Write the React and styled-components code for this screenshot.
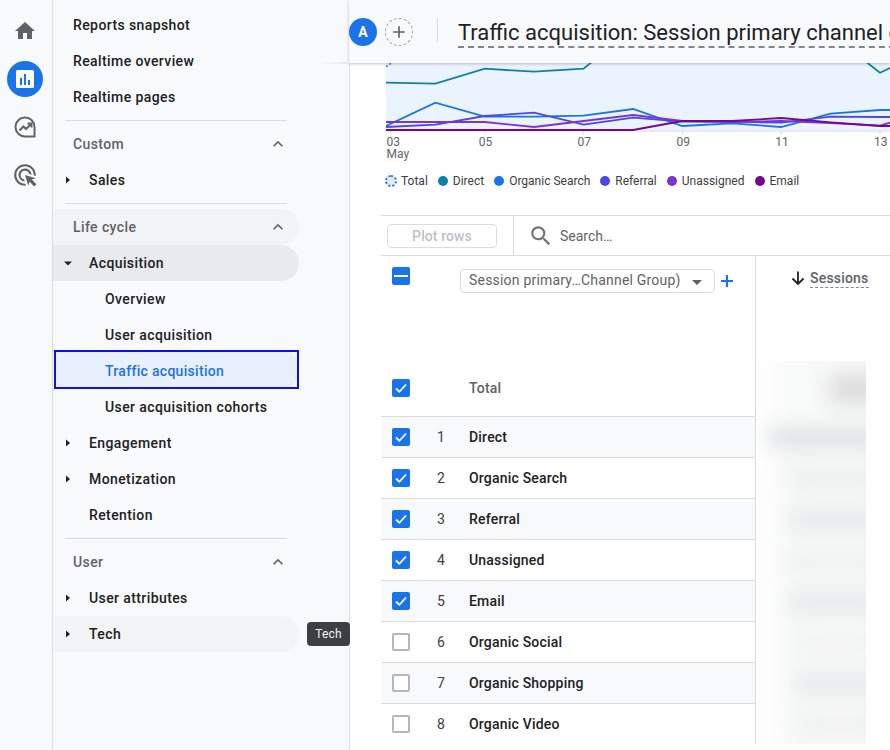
import React from 'react';
import styled, { createGlobalStyle } from 'styled-components';
import { MdHome, MdAdsClick, MdExpandLess, MdAdd, MdSearch } from 'react-icons/md';

const GlobalStyle = createGlobalStyle`
  html, body {
    margin: 0;
    height: 100%;
    overflow: hidden;
    background: #fff;
  }
  body {
    font-family: Roboto, "Liberation Sans", Arial, sans-serif;
    color: #202124;
  }
  * { box-sizing: border-box; }
`;

const Page = styled.div`
  display: flex;
  width: 890px;
  height: 750px;
  overflow: hidden;
`;

// icon rail
const Rail = styled.nav`
  flex: none;
  width: 53px;
  height: 100%;
  padding-top: 13px;
  background: #f8f9fb;
  border-right: 1px solid #dadce0;
  display: flex;
  flex-direction: column;
  align-items: center;
  color: #5f6368;
`;

const RailButton = styled.div`
  width: 36px;
  height: 36px;
  margin-bottom: 12px;
  margin-left: -2px;
  border-radius: 50%;
  display: flex;
  align-items: center;
  justify-content: center;
  background: ${(p) => (p.$active ? '#1a73e8' : 'transparent')};
`;

// sidebar
const Sidebar = styled.aside`
  flex: none;
  width: 297px;
  height: 100%;
  padding-top: 7px;
  background: #f8f9fb;
  border-right: 1px solid #dadce0;
`;

const Divider = styled.div`
  width: 222px;
  height: 1px;
  margin: 5px 0 5px 12px;
  background: #dadce0;
`;

const paddings = { 0: 20, 1: 7, 2: 52, 3: 36 };

const NavRow = styled.div`
  position: relative;
  display: flex;
  align-items: center;
  width: 246px;
  height: 36px;
  padding-left: ${(p) => paddings[p.$level || 0]}px;
  font-size: 14px;
  font-weight: 500;
  letter-spacing: 0.4px;
  color: #202124;
  white-space: nowrap;
  border-radius: 0 18px 18px 0;
  background: ${(p) => p.$bg || 'transparent'};
`;

const SectionRow = styled(NavRow)`
  justify-content: space-between;
  padding-right: 11px;
  color: #5f6368;
  svg {
    color: #5f6368;
  }
`;

const SelectedRow = styled(NavRow)`
  width: 245px;
  height: 39px;
  margin-left: 1px;
  margin-top: -3px;
  padding: 3px 0 0 51px;
  letter-spacing: 0.3px;
  color: #1a73e8;
  background: #e8f0fe;
  &::after {
    content: '';
    position: absolute;
    inset: 0;
    border: 2px solid #1010e6;
  }
`;

const CaretBox = styled.span`
  flex: none;
  display: flex;
  align-items: center;
  justify-content: center;
  width: 16px;
  height: 16px;
  margin-right: 13px;
`;

const Tooltip = styled.div`
  position: absolute;
  left: 254px;
  top: 6px;
  width: 43px;
  height: 24px;
  border-radius: 4px;
  background: #3c4043;
  color: #f1f3f4;
  font-size: 12px;
  font-weight: 400;
  letter-spacing: 0.2px;
  display: flex;
  align-items: center;
  justify-content: center;
`;

// main
const Main = styled.main`
  flex: 1;
  min-width: 0;
  height: 100%;
  background: #fff;
`;

const Header = styled.header`
  position: relative;
  z-index: 2;
  display: flex;
  align-items: center;
  height: 63px;
  margin-left: -1px;
  background: #f8f9fb;
  box-shadow: 0 1px 3px rgba(60, 64, 67, 0.3);
  &::before {
    content: '';
    position: absolute;
    left: -30px;
    top: 62px;
    width: 30px;
    height: 2px;
    background: linear-gradient(to right, rgba(218, 220, 224, 0), #e4e6e9);
  }
`;

const Avatar = styled.div`
  flex: none;
  width: 28px;
  height: 28px;
  border-radius: 50%;
  background: #1a73e8;
  color: #fff;
  font-size: 14px;
  font-weight: 700;
  display: flex;
  align-items: center;
  justify-content: center;
`;

const AddCompare = styled.div`
  flex: none;
  width: 28px;
  height: 28px;
  margin-left: 8px;
  border-radius: 50%;
  border: 1px dashed #9aa0a6;
  color: #5f6368;
  display: flex;
  align-items: center;
  justify-content: center;
`;

const HeaderRule = styled.div`
  flex: none;
  width: 1px;
  height: 24px;
  margin: 0 20px 3px 24px;
  background: #dadce0;
`;

const TitleClip = styled.div`
  flex: 1;
  min-width: 0;
  overflow: hidden;
`;

const Title = styled.h1`
  display: block;
  width: max-content;
  margin: 0;
  padding-top: 4px;
  font-size: 22px;
  line-height: 27px;
  font-weight: 400;
  white-space: nowrap;
  color: #202124;
  border-bottom: 2px dashed #80868b;
`;

const Chart = styled.svg`
  display: block;
  width: 504px;
  height: 100px;
  margin-left: 36px;
`;

const Legend = styled.div`
  display: flex;
  align-items: center;
  height: 16px;
  margin: 10px 0 26px 35px;
  font-size: 12px;
  color: #3c4043;
`;

const LegendItem = styled.div`
  display: flex;
  align-items: center;
  gap: 5px;
  margin-right: 10px;
`;

const LegendDot = styled.span`
  flex: none;
  width: ${(p) => (p.$total ? 12 : 10)}px;
  height: ${(p) => (p.$total ? 12 : 10)}px;
  margin-right: ${(p) => (p.$total ? -1 : 0)}px;
  border-radius: 50%;
  background: ${(p) => (p.$total ? '#e8eaed' : p.$color)};
  border: ${(p) => (p.$total ? '2px dotted #1a73e8' : 'none')};
`;

const TableWrap = styled.section`
  margin-left: 31px;
`;

const Toolbar = styled.div`
  display: flex;
  align-items: center;
  height: 41px;
  border-top: 1px solid #dadce0;
  border-bottom: 1px solid #dadce0;
`;

const PlotCell = styled.div`
  flex: none;
  width: 133px;
  height: 100%;
  padding-left: 6px;
  display: flex;
  align-items: center;
  border-right: 1px solid #dadce0;
`;

const PlotButton = styled.div`
  width: 110px;
  height: 24px;
  border: 1px solid #dadce0;
  border-radius: 4px;
  font-size: 14px;
  font-weight: 500;
  letter-spacing: 0.1px;
  color: #bdc1c6;
  display: flex;
  align-items: center;
  justify-content: center;
`;

const SearchBox = styled.div`
  display: flex;
  align-items: center;
  gap: 6px;
  padding-left: 14px;
  font-size: 14px;
  color: #5f6368;
  svg {
    color: #70757a;
  }
`;

const Table = styled.div`
  display: flex;
`;

const LeftColumn = styled.div`
  flex: none;
  width: 374px;
`;

const HeadArea = styled.div`
  display: flex;
  align-items: flex-start;
  height: 105px;
  padding: 11px 0 0 11px;
`;

const DimensionSelect = styled.div`
  width: 255px;
  height: 24px;
  margin: 2px 0 0 50px;
  padding: 0 12px 2px 8px;
  border: 1px solid #dadce0;
  border-radius: 4px;
  display: flex;
  align-items: center;
  justify-content: space-between;
  font-size: 14px;
  letter-spacing: 0.2px;
  color: #5f6368;
`;

const SelectCaret = styled.span`
  width: 0;
  height: 0;
  border-left: 5px solid transparent;
  border-right: 5px solid transparent;
  border-top: 5px solid #5f6368;
  margin-top: 4px;
`;

const AddDimension = styled.div`
  height: 24px;
  margin: 2px 0 0 4px;
  display: flex;
  align-items: center;
`;

const Row = styled.div`
  display: flex;
  align-items: center;
  height: ${(p) => (p.$total ? 56 : 41)}px;
  padding: ${(p) => (p.$total ? '0 0 2px 11px' : p.$last ? '0 0 1px 11px' : '0 0 0 11px')};
  background: ${(p) => (p.$striped ? '#f8f9fb' : '#fff')};
  border-bottom: ${(p) => (p.$last ? 'none' : '1px solid #dadce0')};
`;

const Box = styled.span`
  flex: none;
  width: 18px;
  height: 18px;
  border-radius: 2px;
  display: flex;
  align-items: center;
  justify-content: center;
  background: ${(p) => (p.$on ? '#1a73e8' : '#fff')};
  border: ${(p) => (p.$on ? 'none' : '2px solid #b4b7bb')};
`;

const RowNumber = styled.span`
  flex: none;
  width: 32px;
  margin-left: 27px;
  font-size: 14px;
  color: #3c4043;
`;

const RowName = styled.span`
  font-size: 14px;
  font-weight: 500;
  letter-spacing: 0.2px;
  color: ${(p) => (p.$muted ? '#5f6368' : '#202124')};
`;

const RightColumn = styled.div`
  flex: 1;
  min-width: 0;
  height: 488px;
  border-left: 1px solid #dadce0;
`;

const MetricHead = styled.div`
  display: flex;
  align-items: flex-start;
  gap: 5px;
  height: 105px;
  padding: 14px 0 0 35px;
`;

const MetricLabel = styled.span`
  font-size: 14px;
  font-weight: 500;
  line-height: 17px;
  letter-spacing: 0.2px;
  color: #5f6368;
  border-bottom: 1px dashed #80868b;
`;

const BlurClip = styled.div`
  width: 110px;
  height: 383px;
  overflow: hidden;
  background: linear-gradient(to right, #fff, #f8f9f9 35%);
`;

const BlurRow = styled.div`
  display: flex;
  align-items: center;
  justify-content: flex-end;
  height: ${(p) => (p.$total ? 56 : 41)}px;
`;

const Smear = styled.div`
  width: ${(p) => p.$width}px;
  height: ${(p) => p.$height || 18}px;
  margin-right: -16px;
  background: ${(p) => p.$color};
  filter: blur(10px);
`;

const days = [386, 435.4, 484.8, 534.2, 583.6, 633, 682.4, 731.8, 781.2, 830.6, 880];

const toPoints = (ys, tail) =>
  ys
    .map((y, i) => `${days[i]},${y}`)
    .concat(tail || [])
    .join(' ');

const series = [
  { color: '#0e7fab', points: '386,82.7 435.4,83.7 484.8,68.7 534.2,71.7 583.6,68.7 593,61 865,61 880,72.7 890,68' },
  { color: '#1a73e8', points: toPoints([126, 102.7, 116.7, 116.7, 115.7, 109, 126, 123.3, 127, 113.7, 110], ['890,110']) },
  { color: '#4c46e8', points: toPoints([127, 124.7, 116, 112.7, 124.7, 117.7, 121.7, 121.7, 122.7, 116.7, 117], ['890,117']) },
  { color: '#7b34d2', points: toPoints([122, 122, 122, 127, 121, 115, 121, 122, 121, 123, 125.7], ['890,122.7']) },
  { color: '#6f0a8e', points: toPoints([130, 130, 130, 130, 130, 130, 121, 121, 118, 122.3, 126], ['890,126']) },
];

const legend = [
  { name: 'Direct', color: '#0e7fab' },
  { name: 'Organic Search', color: '#1a73e8' },
  { name: 'Referral', color: '#4c46e8' },
  { name: 'Unassigned', color: '#7b34d2' },
  { name: 'Email', color: '#6f0a8e' },
];

const rows = [
  { name: 'Direct', on: true, smear: 98, color: '#dcdee1' },
  { name: 'Organic Search', on: true, smear: 76, color: '#ebecec' },
  { name: 'Referral', on: true, smear: 76, color: '#e3e5e7' },
  { name: 'Unassigned', on: true, smear: 80, color: '#eeefef' },
  { name: 'Email', on: true, smear: 76, color: '#e3e5e7' },
  { name: 'Organic Social', on: false, smear: 70, color: '#f1f2f2' },
  { name: 'Organic Shopping', on: false, smear: 70, color: '#e3e5e7' },
  { name: 'Organic Video', on: false, smear: 66, color: '#eeefef' },
];

const Caret = ({ open }) => (
  <svg width="10" height="10" viewBox="0 0 10 10">
    <path d={open ? 'M1 3.5h8L5 7.5z' : 'M3 1.5v7L7 5z'} fill="#202124" />
  </svg>
);

const Check = ({ on, dash }) => (
  <Box $on={on}>
    {on && !dash && (
      <svg width="14" height="14" viewBox="0 0 14 14">
        <path d="M2 7.5l3.4 3.3L12 3.5" fill="none" stroke="#fff" strokeWidth="1.8" />
      </svg>
    )}
    {dash && (
      <svg width="14" height="14" viewBox="0 0 14 14">
        <path d="M0 7h14" stroke="#fff" strokeWidth="2" />
      </svg>
    )}
  </Box>
);

const NavGroup = ({ name, open, bg, children }) => (
  <NavRow $level={1} $bg={bg}>
    <CaretBox>
      <Caret open={open} />
    </CaretBox>
    {name}
    {children}
  </NavRow>
);

const Section = ({ name, bg }) => (
  <SectionRow $bg={bg}>
    {name}
    <MdExpandLess size={20} />
  </SectionRow>
);

export default function App() {
  return (
    <Page>
      <GlobalStyle />
      <Rail>
        <RailButton>
          <MdHome size={24} />
        </RailButton>
        <RailButton $active>
          <svg width="20" height="20" viewBox="0 0 20 20">
            <rect x="1" y="1" width="18" height="18" rx="1.5" fill="#fff" />
            <path d="M5 9h2v7H5zM9 5h2v11H9zM13 11h2v5h-2z" fill="#1a73e8" />
          </svg>
        </RailButton>
        <RailButton>
          <svg width="24" height="24" viewBox="0 0 24 24" fill="none" stroke="#5f6368" strokeWidth="2">
            <path d="M12 2.5a9.5 9.5 0 1 0 0 19h9.5V12A9.5 9.5 0 0 0 12 2.5z" />
            <path d="M6.5 15.5l4-4 2.5 2.5 5-5M14.5 8.5h4v4" />
          </svg>
        </RailButton>
        <RailButton>
          <MdAdsClick size={26} />
        </RailButton>
      </Rail>

      <Sidebar>
        <NavRow>Reports snapshot</NavRow>
        <NavRow>Realtime overview</NavRow>
        <NavRow>Realtime pages</NavRow>
        <Divider />
        <Section name="Custom" />
        <NavGroup name="Sales" />
        <Divider />
        <Section name="Life cycle" bg="#f1f3f4" />
        <NavGroup name="Acquisition" open bg="#e8eaed" />
        <NavRow $level={2}>Overview</NavRow>
        <NavRow $level={2}>User acquisition</NavRow>
        <SelectedRow>Traffic acquisition</SelectedRow>
        <NavRow $level={2}>User acquisition cohorts</NavRow>
        <NavGroup name="Engagement" />
        <NavGroup name="Monetization" />
        <NavRow $level={3}>Retention</NavRow>
        <Divider />
        <Section name="User" />
        <NavGroup name="User attributes" />
        <NavGroup name="Tech" bg="#f1f3f4">
          <Tooltip>Tech</Tooltip>
        </NavGroup>
      </Sidebar>

      <Main>
        <Header>
          <Avatar>A</Avatar>
          <AddCompare>
            <MdAdd size={20} />
          </AddCompare>
          <HeaderRule />
          <TitleClip>
            <Title>Traffic acquisition: Session primary channel group</Title>
          </TitleClip>
        </Header>

        <Chart viewBox="386 63 504 100">
          <rect x="386" y="63" width="504" height="68" fill="#ebf3fe" />
          <path d="M386 131h504" stroke="#e3e5e8" strokeWidth="1.5" />
          {[386, 484.8, 583.6, 682.4, 781.2, 880].map((x) => (
            <path key={x} d={`M${x} 131v4`} stroke="#dadce0" />
          ))}
          <path d="M386 66.7L393 62" stroke="#1a73e8" strokeWidth="1.5" strokeDasharray="2 2" />
          {series.map((s) => (
            <polyline key={s.color} points={s.points} fill="none" stroke={s.color} strokeWidth="1.8" />
          ))}
          <g fill="#5f6368" fontSize="12" fontFamily="Roboto, sans-serif">
            <text x="386.5" y="146">03</text>
            <text x="386.5" y="158">May</text>
            {[['05', 485.5], ['07', 584.3], ['09', 683.2], ['11', 782], ['13', 880.8]].map(([t, x]) => (
              <text key={t} x={x} y="146" textAnchor="middle">{t}</text>
            ))}
          </g>
        </Chart>

        <Legend>
          <LegendItem>
            <LegendDot $total />
            Total
          </LegendItem>
          {legend.map((l) => (
            <LegendItem key={l.name}>
              <LegendDot $color={l.color} />
              {l.name}
            </LegendItem>
          ))}
        </Legend>

        <TableWrap>
          <Toolbar>
            <PlotCell>
              <PlotButton>Plot rows</PlotButton>
            </PlotCell>
            <SearchBox>
              <MdSearch size={26} />
              Search…
            </SearchBox>
          </Toolbar>
          <Table>
            <LeftColumn>
              <HeadArea>
                <Check on dash />
                <DimensionSelect>
                  Session primary…Channel Group)
                  <SelectCaret />
                </DimensionSelect>
                <AddDimension>
                  <svg width="16" height="16" viewBox="0 0 16 16">
                    <path d="M8 2v12M2 8h12" stroke="#1a73e8" strokeWidth="2.2" fill="none" />
                  </svg>
                </AddDimension>
              </HeadArea>
              <Row $total>
                <Check on />
                <RowNumber />
                <RowName $muted>Total</RowName>
              </Row>
              {rows.map((r, i) => (
                <Row key={r.name} $striped={i % 2 === 0} $last={i === rows.length - 1}>
                  <Check on={r.on} />
                  <RowNumber>{i + 1}</RowNumber>
                  <RowName>{r.name}</RowName>
                </Row>
              ))}
            </LeftColumn>
            <RightColumn>
              <MetricHead>
                <svg width="14" height="16" viewBox="0 0 14 16">
                  <path d="M7 1.5v12.5M1.5 8.5L7 14l5.5-5.5" fill="none" stroke="#202124" strokeWidth="1.8" />
                </svg>
                <MetricLabel>Sessions</MetricLabel>
              </MetricHead>
              <BlurClip>
                <BlurRow $total>
                  <Smear $width={52} $height={30} $color="#dcdcdc" />
                </BlurRow>
                {rows.map((r) => (
                  <BlurRow key={r.name}>
                    <Smear $width={r.smear + 16} $color={r.color} />
                  </BlurRow>
                ))}
              </BlurClip>
            </RightColumn>
          </Table>
        </TableWrap>
      </Main>
    </Page>
  );
}
